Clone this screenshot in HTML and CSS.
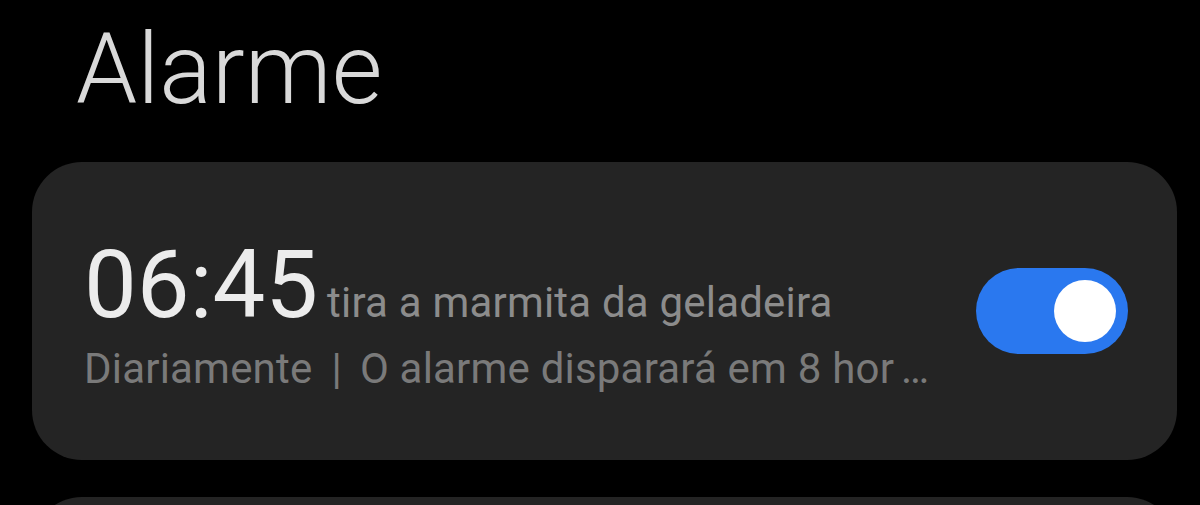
FILE: index.html
```html
<!DOCTYPE html>
<html lang="pt">
<head>
<meta charset="utf-8">
<link rel="stylesheet" href="styles.css">
</head>
<body>
<div class="page">
  <h1 class="title">Alarme</h1>
  <div class="card">
    <div class="info">
      <div class="line1"><span class="time">06:45</span><span class="label">tira a marmita da geladeira</span></div>
      <div class="line2"><span>Diariamente</span><span class="sep">|</span><span class="msg">O alarme disparará em 8 hor</span><span class="dots">…</span></div>
    </div>
    <div class="toggle"><div class="knob"></div></div>
  </div>
  <div class="card next"></div>
</div>
</body>
</html>
```
FILE: styles.css
```css
html, body { margin: 0; padding: 0; background: #000; }
body { font-family: Roboto, "Noto Sans", sans-serif; }
.page { padding: 0 23px 0 32px; height: 505px; overflow: hidden; box-sizing: border-box; }
.title { margin: 0; padding: 10px 0 0 44px; font-weight: 300; font-size: 98px; line-height: 120px; color: #d9d9d9; height: 152px; box-sizing: border-box; }
.card { background: #242424; border-radius: 50px; height: 298px; display: flex; align-items: center; padding: 0 49px 0 52px; box-sizing: border-box; margin-top: 10px; }
.card.next { margin-top: 37px; height: 100px; }
.info { flex: 1; min-width: 0; padding-top: 7px; }
.line1 { display: flex; align-items: baseline; white-space: nowrap; }
.time { font-size: 94px; color: #ececec; line-height: 100px; }
.label { font-size: 42px; color: #8c8c8c; margin-left: 9px; letter-spacing: 0.2px; }
.line2 { display: flex; white-space: nowrap; font-size: 42px; line-height: 50px; color: #7a7a7a; margin-top: 9px; letter-spacing: 0.2px; }
.sep { margin: 0 18px 0 19px; }
.msg { letter-spacing: 0.2px; }
.dots { margin-left: 7px; letter-spacing: 0; }
.toggle { width: 152px; height: 86px; border-radius: 43px; background: #2a78ef; position: relative; flex: none; }
.knob { position: absolute; width: 62px; height: 62px; border-radius: 50%; background: #fff; right: 12px; top: 12px; }
```
